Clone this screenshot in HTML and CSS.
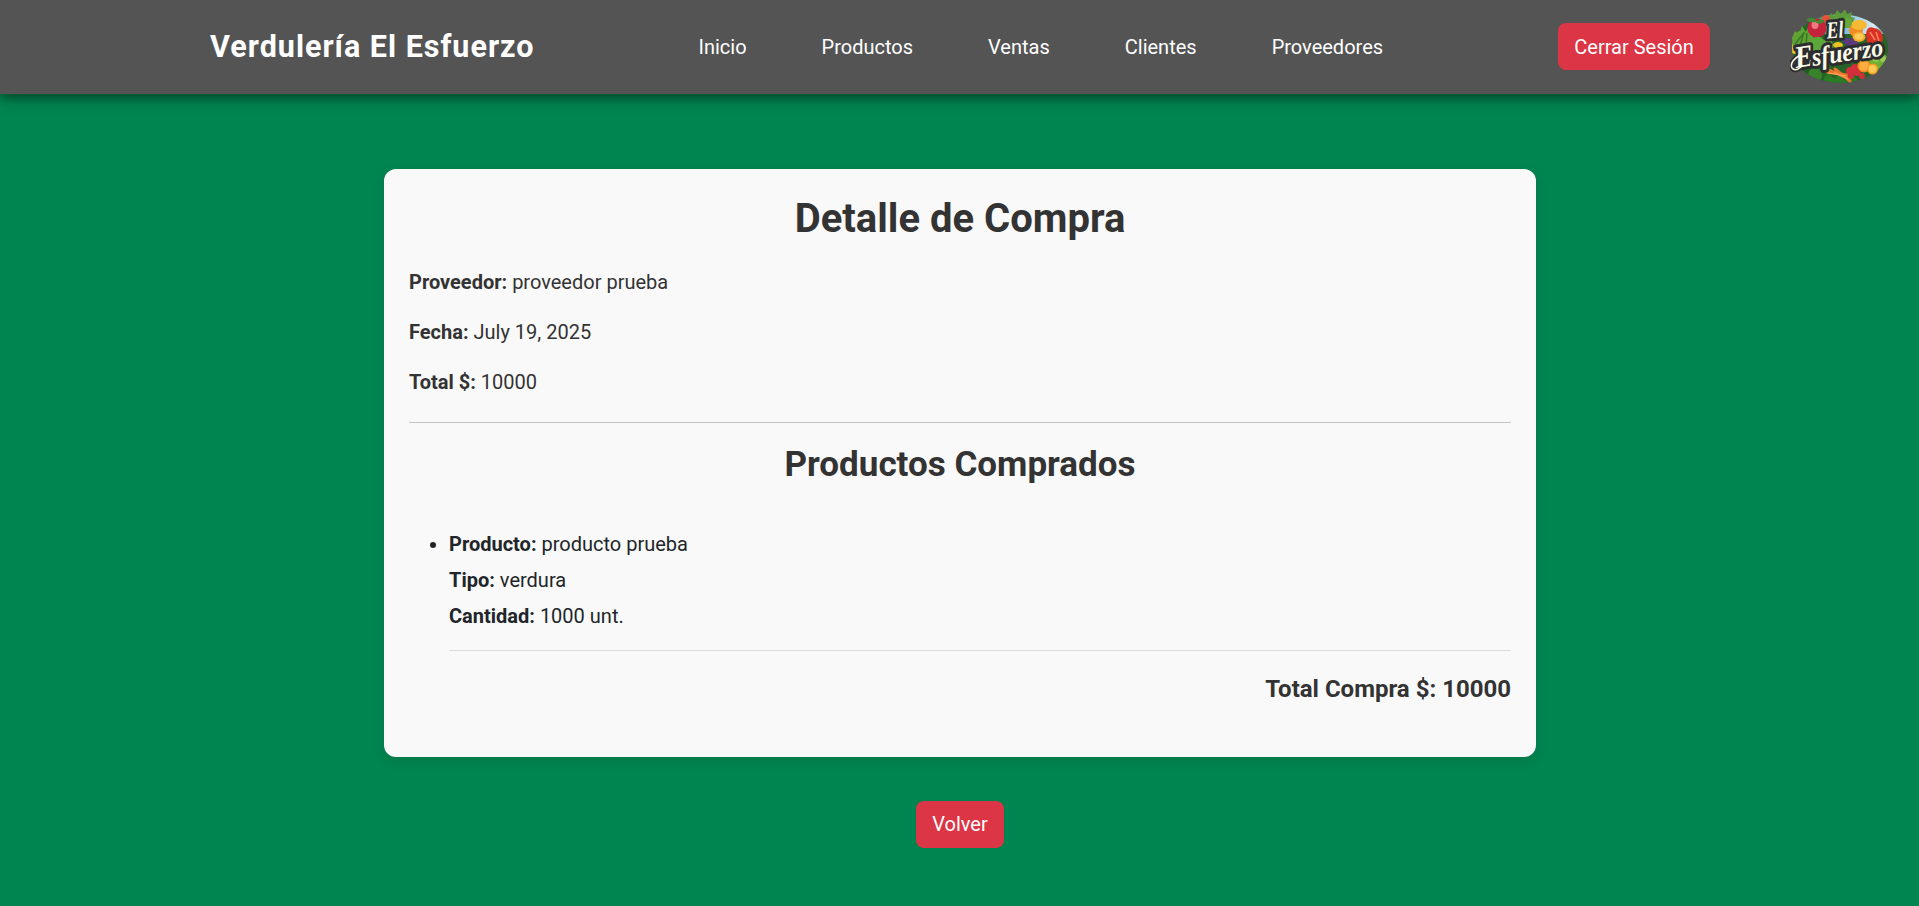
FILE: index.html
```html
<!DOCTYPE html>
<html lang="es">
<head>
<meta charset="utf-8">
<title>Detalle de Compra</title>
<link rel="stylesheet" href="styles.css">
</head>
<body>
<header class="header">
  <div class="brand">Verdulería El Esfuerzo</div>
  <nav class="nav">
    <a>Inicio</a><a>Productos</a><a>Ventas</a><a>Clientes</a><a>Proveedores</a>
  </nav>
  <a class="btn">Cerrar Sesión</a>
  <svg class="logo" width="100" height="76" viewBox="0 0 100 76">
    <defs>
      <clipPath id="oval"><ellipse cx="50" cy="38.500" rx="48" ry="34.500"/></clipPath>
      <linearGradient id="sky" x1="0" x2="1"><stop offset="0" stop-color="#3f8a3a"/><stop offset=".5" stop-color="#8fc3e4"/><stop offset=".8" stop-color="#dcecf4"/><stop offset="1" stop-color="#2e8f8c"/></linearGradient>
    </defs>
    <g clip-path="url(#oval)">
      <rect width="100" height="76" fill="#266326"/>
      <rect x="20" width="80" height="24" fill="url(#sky)"/>
      <path d="M2 28L9 20L13 27L18 18L22 28L30 26L30 40L2 44Z" fill="#68a832"/>
      <path d="M24 34q8-8 16 0l4 10H20Z" fill="#3c8c2c"/>
      <circle cx="6" cy="38" r="6" fill="#e6c926"/>
      <circle cx="14" cy="61" r="8" fill="#1f5d23"/>
      <circle cx="25" cy="65" r="7" fill="#38832a"/>
      <path d="M34 68l5-5 5 6 6-5 5 7 8-7 6 8-6 6H34Z" fill="#2d7a27"/>
      <circle cx="89" cy="54" r="11" fill="#70ad35"/>
      <circle cx="93" cy="49" r="3" fill="#9bcc55"/><circle cx="86" cy="49" r="3" fill="#94c94b"/><circle cx="94" cy="58" r="3" fill="#4d9228"/>
    </g>
    <path d="M38 8l3-5 3 3 3-6 4 4 4-5 2 5 5-2-1 5 4 1-5 10H42Z" fill="#5c9c3b"/>
    <path d="M2 28l3-7 4 3 3-8 4 6 5-3 3 11-6 8H3Z" fill="#61a234"/>
    <path d="M5 34l8-10M10 36l4-14M16 35l1-12" stroke="#347a24" stroke-width="1.5"/>
    <circle cx="36" cy="9" r="4" fill="#e8513a"/>
    <circle cx="27" cy="18" r="9.500" fill="#c5233b"/><ellipse cx="25" cy="15" rx="3.5" ry="4" fill="#ee7980"/>
    <path d="M16 10q7-5 11 1q6-3 8 0q-5 5-10 1q-4 1-9-2Z" fill="#438b31"/>
    <path d="M22 31q6-8 12-1l8 1 2 9-12 6-12-4Z" fill="#5ba738"/>
    <circle cx="66" cy="20" r="7" fill="#f08d27"/>
    <ellipse cx="69" cy="15" rx="8" ry="5" fill="#f7b834"/>
    <circle cx="57" cy="13" r="5" fill="#69a93b"/>
    <path d="M76 24q1-9 8-6q8 1 9 10l-2 10-13 1Z" fill="#db3022"/>
    <path d="M80 22l5 8M86 22l3 9" stroke="#ff8266" stroke-width="1.5"/>
    <ellipse cx="69" cy="27" rx="6.500" ry="5" fill="#f7a72a"/><ellipse cx="69" cy="26.5" rx="4.500" ry="3.2" fill="#ffcb59"/>
    <g fill="#5b397c"><circle cx="56" cy="31" r="3"/><circle cx="61" cy="31" r="3"/><circle cx="59" cy="34" r="3"/><circle cx="65" cy="34" r="3"/></g>
    <ellipse cx="48" cy="35" rx="5" ry="3" fill="#eec025"/>
    <path d="M37 62l20 3M39 60l20 9M45 59l15 12" stroke="#ee752e" stroke-width="3" stroke-linecap="round"/>
    <path d="M38 63l18 3M44 62l14 7" stroke="#ffa65b"/>
    <g fill="#d42e3c"><circle cx="60" cy="61" r="4"/><circle cx="65" cy="58" r="4"/><circle cx="67" cy="62" r="4"/><circle cx="61" cy="66" r="3"/><circle cx="72" cy="66" r="3"/></g>
    <circle cx="74" cy="56" r="6.500" fill="#f58b1b"/><circle cx="74" cy="56" r="4.800" fill="#ffae43"/>
    <circle cx="82.500" cy="59" r="5.500" fill="#f59d1d"/><circle cx="82.500" cy="59" r="4" fill="#ffc753"/>
    <g class="logo-text">
      <text transform="translate(37 28.500) rotate(-4)" textLength="17" lengthAdjust="spacingAndGlyphs" font-size="24">El</text>
      <path d="M10 45q-11 7-8 13q3 4 9-1" fill="none" stroke="#2d2d30" stroke-width="5" stroke-linecap="round"/>
      <text transform="translate(6 58) rotate(-9)" textLength="19" lengthAdjust="spacingAndGlyphs" font-size="31">E</text>
      <text transform="translate(23 56) rotate(-8.500)" textLength="72" lengthAdjust="spacingAndGlyphs" font-size="26">sfuerzo</text>
      <path d="M10 45q-11 7-8 13q3 4 9-1" fill="none" stroke="#fbfbe9" stroke-width="1.500" stroke-linecap="round"/>
    </g>
  </svg>
</header>
<main class="main">
  <section class="card">
    <h1>Detalle de Compra</h1>
    <p><strong>Proveedor:</strong> proveedor prueba</p>
    <p><strong>Fecha:</strong> July 19, 2025</p>
    <p><strong>Total $:</strong> 10000</p>
    <h2>Productos Comprados</h2>
    <ul class="items">
      <li><strong>Producto:</strong> producto prueba<br><strong>Tipo:</strong> verdura<br><strong>Cantidad:</strong> 1000 unt.</li>
    </ul>
    <div class="total">Total Compra $: 10000</div>
  </section>
  <a class="btn">Volver</a>
</main>
</body>
</html>
```
FILE: styles.css
```css
* { box-sizing: border-box; }
body {
  margin: 0;
  min-height: 906px;
  background: #008550;
  font: 20px/30px Roboto, sans-serif;
  color: #212529;
}
.header {
  position: relative;
  display: flex;
  align-items: center;
  height: 94px;
  padding-left: 210px;
  background: #545454;
  color: #fff;
  box-shadow: 0 4px 12px rgba(0, 0, 0, .5);
}
.brand {
  width: 488.500px;
  font-size: 30.500px;
  font-weight: 700;
  letter-spacing: 1px;
  white-space: nowrap;
}
.nav {
  display: flex;
  gap: 75px;
  width: 859.500px;
}
.btn {
  display: block;
  height: 47px;
  padding: 8px 16.300px;
  border-radius: 8px;
  background: #dc3545;
  color: #fff;
  white-space: nowrap;
}
.header .btn {
  margin-bottom: 1px;
  padding-top: 9px;
}
.logo { margin: 2px 0 0 80px; }
.logo-text text {
  font-family: "Liberation Serif", serif;
  font-style: italic;
  font-weight: 700;
  fill: #fbfbe9;
  stroke: #2d2d30;
  stroke-width: 6px;
  stroke-linejoin: round;
  paint-order: stroke;
}
.main {
  display: flex;
  flex-direction: column;
  align-items: center;
  gap: 44px;
  padding: 75px 0 0 1px;
}
.card {
  width: 1152px;
  height: 588px;
  padding: 25px;
  border-radius: 12px;
  background: #f9f9f9;
  box-shadow: 0 4px 12px rgba(0, 0, 0, .1);
}
h1, h2, p { margin: 0; color: #333; }
h1 {
  margin: 1px 0 24px;
  font-size: 40px;
  line-height: 48px;
  text-align: center;
}
p { margin-bottom: 20px; }
h2 {
  margin-top: 25px;
  padding-top: 21px;
  border-top: 1px solid #c3c3c3;
  font-size: 35px;
  line-height: 42px;
  text-align: center;
}
.items {
  margin: 40px 0 20px;
  padding-left: 40px;
  line-height: 36px;
}
.items li {
  padding-bottom: 16px;
  border-bottom: 1px solid #ddd;
}
.total {
  color: #333;
  font-size: 24px;
  font-weight: 700;
  line-height: 36px;
  text-align: right;
}
```
